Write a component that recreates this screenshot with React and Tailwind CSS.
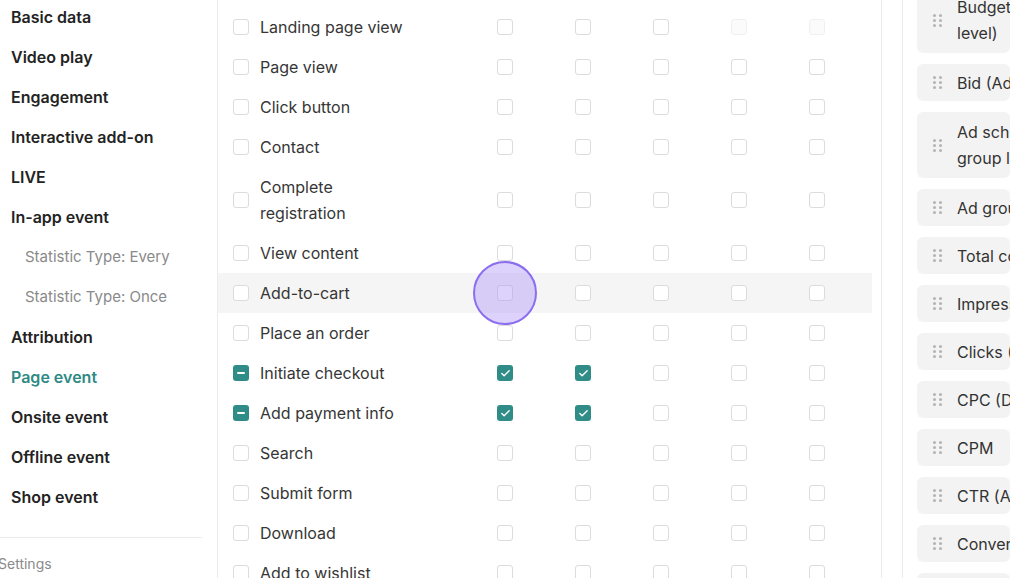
import { Check } from "lucide-react";

const sideItems = [
  { label: "Basic data" },
  { label: "Video play" },
  { label: "Engagement" },
  { label: "Interactive add-on" },
  { label: "LIVE" },
  { label: "In-app event" },
  { label: "Statistic Type: Every", sub: true },
  { label: "Statistic Type: Once", sub: true },
  { label: "Attribution" },
  { label: "Page event", active: true },
  { label: "Onsite event" },
  { label: "Offline event" },
  { label: "Shop event" },
];

// 0 = empty, 1 = checked, 2 = disabled
const rows = [
  { label: "Landing page view", cells: [0, 0, 0, 2, 2] },
  { label: "Page view", cells: [0, 0, 0, 0, 0] },
  { label: "Click button", cells: [0, 0, 0, 0, 0] },
  { label: "Contact", cells: [0, 0, 0, 0, 0] },
  { label: "Complete registration", cells: [0, 0, 0, 0, 0] },
  { label: "View content", cells: [0, 0, 0, 0, 0] },
  { label: "Add-to-cart", cells: [0, 0, 0, 0, 0], hover: true },
  { label: "Place an order", cells: [0, 0, 0, 0, 0] },
  { label: "Initiate checkout", cells: [1, 1, 0, 0, 0], partial: true },
  { label: "Add payment info", cells: [1, 1, 0, 0, 0], partial: true },
  { label: "Search", cells: [0, 0, 0, 0, 0] },
  { label: "Submit form", cells: [0, 0, 0, 0, 0] },
  { label: "Download", cells: [0, 0, 0, 0, 0] },
  { label: "Add to wishlist", cells: [0, 0, 0, 0, 0] },
];

const metrics = [
  { lines: ["Budget (Ad group", "level)"] },
  { lines: ["Bid (Ad group level)"] },
  { lines: ["Ad schedule (Ad", "group level)"] },
  { lines: ["Ad group ID"] },
  { lines: ["Total cost"] },
  { lines: ["Impressions"] },
  { lines: ["Clicks (Destination)"] },
  { lines: ["CPC (Destination)"] },
  { lines: ["CPM"] },
  { lines: ["CTR (All)"] },
  { lines: ["Conversions"] },
  { lines: ["Cost per conversion"] },
];

function Box({ state }) {
  if (state === 1) {
    return (
      <span className="w-4 h-4 rounded-[3px] bg-[#2f8c86] flex items-center justify-center">
        <Check size={11} strokeWidth={3} className="text-white" />
      </span>
    );
  }
  if (state === 3) {
    return (
      <span className="w-4 h-4 rounded-[3px] bg-[#2f8c86] flex items-center justify-center">
        <span className="w-2 h-[2px] bg-white rounded-full" />
      </span>
    );
  }
  if (state === 2) {
    return <span className="w-4 h-4 rounded-[3px] border border-[#f0f0f0] bg-[#fbfbfb]" />;
  }
  return <span className="w-4 h-4 rounded-[3px] border border-[#dcdcdc] bg-white" />;
}

function Grip() {
  return (
    <span className="shrink-0 grid grid-cols-[3px_3px] gap-x-[3px] gap-y-[2px]">
      {[0, 1, 2, 3, 4, 5].map(i => (
        <span key={i} className="w-[3px] h-[3px] rounded-full bg-[#b4b4b4]" />
      ))}
    </span>
  );
}

export default function App() {
  return (
    <div className="w-[1024px] h-[586px] bg-white overflow-hidden font-['Inter',sans-serif]">
      <div className="flex h-[578px] overflow-hidden">
        {/* Sidebar */}
        <div className="w-[218px] shrink-0 border-r border-[#ececec] flex flex-col">
          <div className="mt-[-3px] mr-[15px]">
            {sideItems.map(item => (
              <div
                key={item.label}
                className={`h-10 flex items-center whitespace-nowrap ${
                  item.sub
                    ? "pl-[25px] text-[15px] text-[#8a8a8a]"
                    : item.active
                    ? "pl-[11px] text-[16px] font-semibold text-[#2e8a84]"
                    : "pl-[11px] text-[16px] font-semibold text-[#232323]"
                }`}
              >
                {item.label}
              </div>
            ))}
            <div className="mt-5 border-t border-[#ececec]" />
            <div className="h-[50px] flex items-center -ml-[2px] text-[14px] text-[#8a8a8a]">Settings</div>
          </div>
        </div>

        {/* Event table */}
        <div className="w-[664px] shrink-0 border-r border-[#ececec] pt-[7px]">
          {rows.map(row => (
            <div
              key={row.label}
              className={`w-[654px] flex items-center py-[7px] ${row.hover ? "bg-[#f5f5f5]" : ""}`}
            >
              <div className="w-[248px] shrink-0 flex items-center pl-[15px] gap-[11px]">
                <Box state={row.partial ? 3 : 0} />
                <span className="w-[152px] text-[16px] leading-[26px] text-[#363636]">{row.label}</span>
              </div>
              {row.cells.map((c, i) => (
                <div key={i} className="relative w-[78px] shrink-0 flex items-center justify-center">
                  <Box state={c} />
                  {row.hover && i === 0 && (
                    <span className="absolute left-1/2 top-1/2 -translate-x-1/2 -translate-y-1/2 w-16 h-16 rounded-full border-[2.5px] border-[#8b6df0] bg-[#a98ef5]/40" />
                  )}
                </div>
              ))}
            </div>
          ))}
        </div>

        {/* Spacer column */}
        <div className="w-[21px] shrink-0 border-r border-[#ececec]" />

        {/* Selected metrics */}
        <div className="flex-1 pl-[14px] flex flex-col gap-[11px] mt-[-13px]">
          {metrics.map(m => (
            <div
              key={m.lines[0]}
              className={`w-[93px] shrink-0 rounded-[6px] bg-[#f3f3f3] overflow-hidden flex items-center gap-[15px] pl-[16px] ${
                m.lines.length > 1 ? "h-[66px]" : "h-[37px]"
              }`}
            >
              <Grip />
              <span className="flex flex-col whitespace-nowrap text-[16px] leading-[26px] text-[#333]">
                {m.lines.map(l => (
                  <span key={l}>{l}</span>
                ))}
              </span>
            </div>
          ))}
        </div>
      </div>
    </div>
  );
}
